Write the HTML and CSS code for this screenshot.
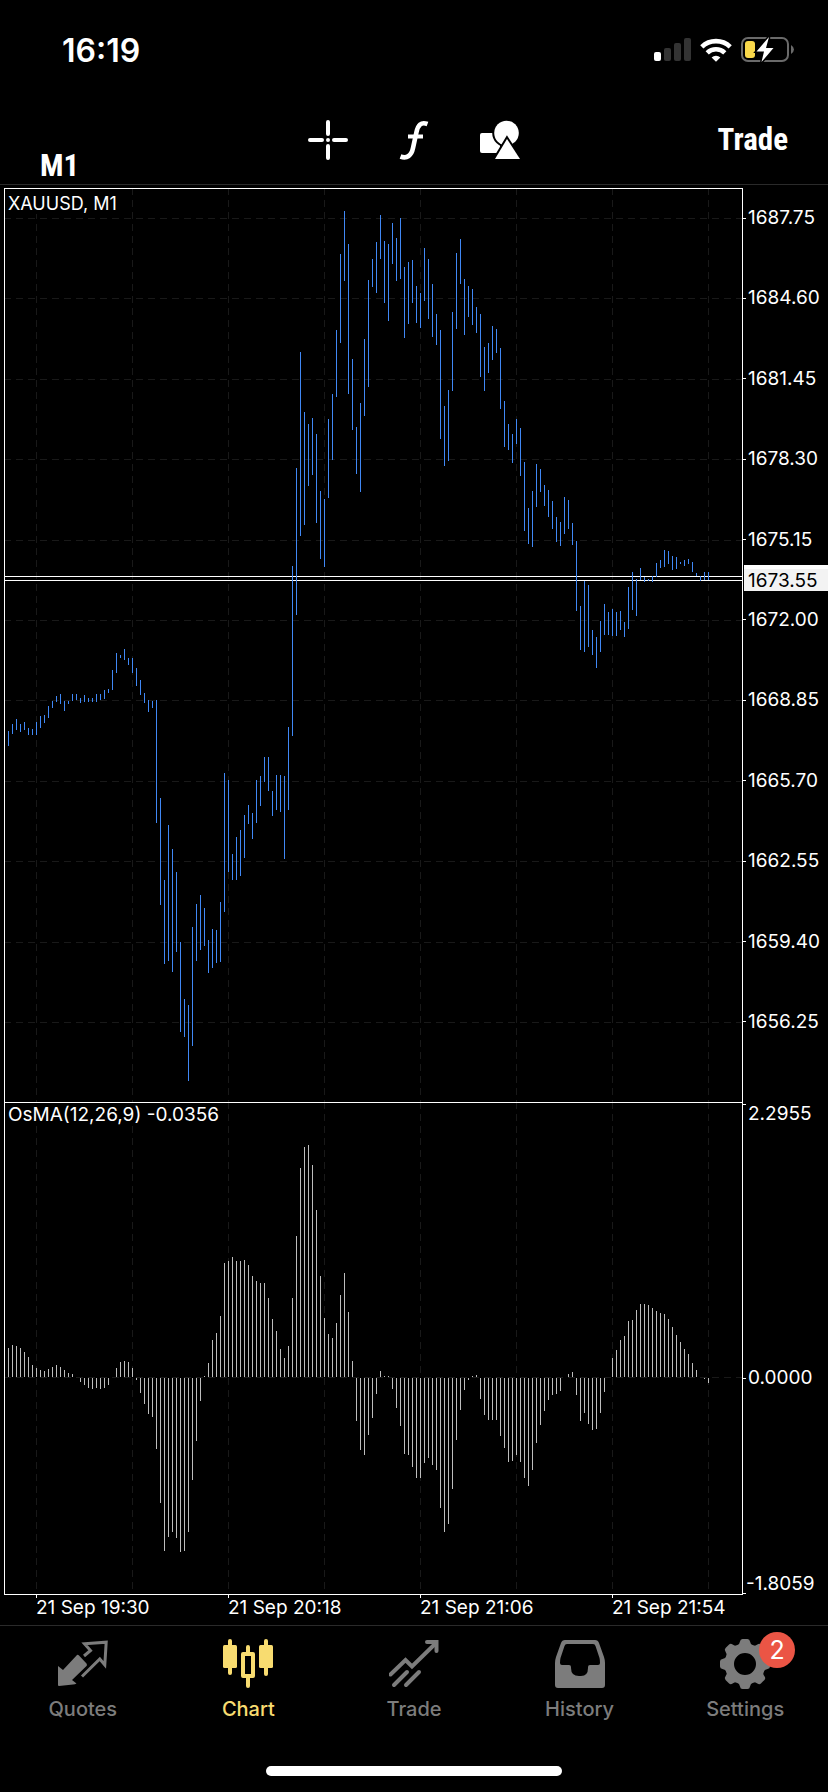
FILE: index.html
```html
<!DOCTYPE html>
<html lang="en">
<head>
  <meta charset="UTF-8" />
  <meta name="viewport" content="width=device-width, initial-scale=1" />
  <title>XAUUSD, M1</title>
  <link rel="stylesheet" href="styles.css">
</head>
<body>
  <div class="status-bar">
    <span class="clock">16:19</span>
    <div class="status-icons">
      <svg width="37" height="24" viewBox="0 0 37 24" aria-label="Signal">
        <rect x="0" y="14" width="7" height="9" rx="2" fill="#fff" />
        <g fill="#333">
          <rect x="10" y="10" width="7" height="13" rx="2" />
          <rect x="20" y="5" width="7" height="18" rx="2" />
          <rect x="30" y="0" width="7" height="23" rx="2" />
        </g>
      </svg>
      <svg width="32" height="24" viewBox="0 0 32 24" aria-label="Wi-Fi">
        <g fill="none" stroke="#fff" stroke-width="4.6">
          <path d="M1.8 8.8A20.5 20.5 0 0 1 30.2 8.8" />
          <path d="M7.2 14.8A12.7 12.7 0 0 1 24.8 14.8" />
        </g>
        <path d="M16 23.8L11.6 19.4A6.4 6.4 0 0 1 20.4 19.4Z" fill="#fff" />
      </svg>
      <svg width="53" height="26" viewBox="0 0 53 26" aria-label="Battery">
        <rect x="1" y="1" width="46" height="23" rx="6" fill="none" stroke="#6a6a6a" stroke-width="2" />
        <path d="M50 8Q53 10 53 12.500Q53 15 50 17Z" fill="#6a6a6a" />
        <rect x="4" y="4" width="10" height="17" rx="3" fill="#f9d84a" />
        <path d="M28 0L15.500 14.500H23L20.500 25L32.500 11H25Z" fill="#fff" stroke="#000" stroke-width="3" paint-order="stroke" />
      </svg>
    </div>
  </div>

  <header class="toolbar">
    <button class="text-button timeframe" type="button">M1</button>
    <div class="tools">
      <button type="button" aria-label="Crosshair">
        <svg width="40" height="40" viewBox="0 0 40 40" stroke="#fff" stroke-width="4" stroke-linecap="round">
          <path d="M20 2V14M20 26V38M2 20H14M26 20H38M20 20V20" />
        </svg>
      </button>
      <button type="button" aria-label="Indicators">
        <svg width="40" height="40" viewBox="0 0 40 40" fill="none" stroke="#fff" stroke-width="4">
          <path d="M33.500 4C27 1.500 24 5 22.500 12L19 28C17.500 35.500 13 39 6.500 36.500" stroke-width="4.600" />
          <path d="M14 16.500H29" />
        </svg>
      </button>
      <button type="button" aria-label="Objects">
        <svg width="40" height="40" viewBox="0 0 40 40" fill="#fff" stroke="#000" stroke-width="4" paint-order="stroke">
          <rect x="0" y="13" width="20" height="20" rx="2" stroke="none" />
          <circle cx="26.500" cy="13" r="12.300" />
          <path d="M27 19L40 39H15Z" />
        </svg>
      </button>
    </div>
    <button class="text-button trade" type="button">Trade</button>
  </header>

  <main class="chart">
    <div class="plot">
      <span class="plot-title">XAUUSD, M1</span>
      <svg id="price" viewBox="0 0 737 913"></svg>
    </div>
    <div class="axis price-axis">
      <span>1687.75</span>
      <span>1684.60</span>
      <span>1681.45</span>
      <span>1678.30</span>
      <span>1675.15</span>
      <span>1672.00</span>
      <span>1668.85</span>
      <span>1665.70</span>
      <span>1662.55</span>
      <span>1659.40</span>
      <span>1656.25</span>
      <strong class="price-tag">1673.55</strong>
    </div>

    <div class="plot">
      <span class="plot-title indicator">OsMA(12,26,9) -0.0356</span>
      <svg id="osma" viewBox="0 0 737 491"></svg>
    </div>
    <div class="axis osma-axis">
      <span class="max">2.2955</span>
      <span class="zero">0.0000</span>
      <span class="min">-1.8059</span>
    </div>

    <div class="dates">
      <time>21 Sep 19:30</time>
      <time>21 Sep 20:18</time>
      <time>21 Sep 21:06</time>
      <time>21 Sep 21:54</time>
    </div>
  </main>

  <footer>
    <nav class="tabs">
      <a href="#quotes">
        <svg width="50" height="50" viewBox="0 0 50 50">
          <path d="M0 27L5 31L19 16Q20 15.500 21 16.500L28.500 24.500Q29.500 26 28.500 27L14 41L18.500 44.500Q17 45.500 15 45.500L1 47Q0 47 0 46Z" fill="currentColor" />
          <path d="M26 17L32.500 11.500L26.500 4.800L48.200 3.200L46.800 26L41.800 20L24 37.500" fill="none" stroke="currentColor" stroke-width="3" />
        </svg>
        <span>Quotes</span>
      </a>
      <a href="#chart" class="active">
        <svg width="50" height="50" viewBox="0 0 50 50" fill="currentColor">
          <rect x="0" y="6" width="14" height="23" rx="1.500" />
          <rect x="5" y="0" width="4" height="36" rx="2" />
          <path d="M20 13H30Q32 13 32 15V37Q32 39 30 39H20Q18 39 18 37V15Q18 13 20 13ZM22 17V35H28V17Z" fill-rule="evenodd" />
          <path d="M23 14V8Q23 6 25 6Q27 6 27 8V14ZM23 38V47Q23 49 25 49Q27 49 27 47V38Z" />
          <rect x="36" y="6" width="14" height="23" rx="1.500" />
          <rect x="41" y="0" width="4" height="37" rx="2" />
        </svg>
        <span>Chart</span>
      </a>
      <a href="#trade">
        <svg width="50" height="50" viewBox="0 0 50 50" fill="none" stroke="currentColor" stroke-width="4">
          <path d="M1.500 35.500L16.500 21L23 27.500L47 4" stroke-linecap="round" />
          <path d="M38 3H47.500V12" stroke-linecap="round" />
          <path d="M5 46L18 33M17 46L30 33" stroke-linecap="round" />
        </svg>
        <span>Trade</span>
      </a>
      <a href="#history">
        <svg width="50" height="50" viewBox="0 0 50 50">
          <path d="M10 1H40Q43 1 44 4L49 18Q50 21 50 24V46Q50 49 47 49H3Q0 49 0 46V24Q0 21 1 18L6 4Q7 1 10 1ZM12 5Q10 5 9.500 7L5.500 19Q5 21 5 24Q5 26 7 26H14Q16 26 16 28V29Q16 37 24 37H26Q33 37 33 29V28Q33 26 35 26H43Q45 26 45 24Q45 21 44.500 19L40.500 7Q40 5 38 5Z" fill="currentColor" fill-rule="evenodd" />
        </svg>
        <span>History</span>
      </a>
      <a href="#settings">
        <svg width="50" height="50" viewBox="0 0 50 50">
          <g id="gear" fill="currentColor"></g>
        </svg>
        <b class="badge">2</b>
        <span>Settings</span>
      </a>
    </nav>
    <div class="home-indicator"></div>
  </footer>

  <script>
    const STEP = 4;
    const FIRST_X = 3;
    const ZERO_Y = 274;

    // top and bottom of each M1 bar, in pane units
    const bars = [
      [542,557],[535,545],[530,541],[535,543],[533,541],[539,546],[540,546],[533,546],[527,539],[526,534],
      [517,529],[512,519],[507,513],[505,515],[512,522],[512,515],[505,512],[505,511],[509,514],[506,513],
      [509,513],[509,513],[505,513],[505,511],[501,510],[500,504],[481,501],[464,484],[466,469],[460,471],
      [469,476],[469,484],[479,497],[491,506],[504,514],[511,523],[512,519],[511,634],[609,716],[691,775],
      [636,772],[660,783],[683,763],[753,843],[810,848],[816,892],[738,857],[715,772],[706,761],[719,757],
      [751,784],[740,779],[741,774],[713,773],[584,723],[591,683],[665,691],[648,691],[641,687],[626,669],
      [616,635],[624,650],[591,634],[587,617],[568,593],[568,602],[602,627],[586,621],[586,623],[587,670],
      [538,621],[377,547],[279,426],[163,347],[223,336],[235,297],[229,286],[245,334],[302,370],[310,378],
      [230,309],[205,271],[141,208],[65,154],[22,92],[55,205],[170,241],[238,285],[214,303],[150,227],
      [91,198],[70,98],[53,104],[26,70],[52,114],[55,132],[34,75],[49,92],[29,90],[78,149],
      [73,135],[71,114],[97,134],[104,139],[59,112],[70,130],[95,148],[125,156],[141,250],[217,277],
      [201,272],[123,202],[64,140],[50,95],[90,146],[97,128],[100,136],[118,144],[125,188],[158,202],
      [154,184],[137,171],[140,164],[159,220],[212,258],[235,261],[245,274],[230,255],[239,287],[273,342],
      [319,355],[302,358],[275,318],[280,303],[296,317],[301,328],[312,340],[328,353],[333,357],[308,345],
      [311,340],[334,356],[352,422],[417,461],[392,463],[396,458],[441,466],[448,479],[432,463],[415,446],
      [423,446],[420,447],[423,447],[422,441],[433,448],[398,440],[383,421],[390,427],[379,391],[388,393],
      [390,392],[387,393],[374,388],[371,379],[361,378],[362,375],[367,381],[368,380],[373,375],[371,377],
      [370,375],[373,383],[384,387],[387,392],[383,391],[383,391]
    ];

    // signed histogram heights
    const osma = [
      29,32,31,29,25,20,12,9,7,6,8,10,12,10,7,4,3,0,-4,-7,-10,-11,-10,-11,-10,-7,0,9,15,16,15,9,
      -2,-15,-26,-36,-39,-71,-125,-173,-159,-154,-160,-174,-173,-154,-102,-63,-23,1,14,37,44,61,
      114,116,120,116,116,117,112,101,96,94,94,79,58,46,28,19,31,79,141,209,230,232,212,167,
      101,59,43,39,54,82,104,65,16,-43,-72,-77,-57,-40,-16,6,1,1,-11,-30,-48,-76,-77,-89,-100,-100,
      -85,-80,-87,-92,-130,-154,-146,-111,-62,-32,-12,-2,1,2,-21,-37,-42,-42,-42,-58,-70,-84,-83,
      -77,-84,-100,-108,-92,-65,-47,-33,-22,-17,-16,-13,0,3,5,-17,-43,-35,-46,-52,-51,-35,-14,0,
      19,27,37,41,56,57,67,73,73,72,69,66,64,63,58,50,42,35,28,23,14,7,0,-1,-5
    ];

    const gridX = [31, 127, 223, 319, 415, 511, 607, 703];
    const gridY = [29, 109, 190, 270, 351, 431, 511, 592, 672, 753, 833];

    function addPath(svg, cls, d) {
      const path = document.createElementNS("http://www.w3.org/2000/svg", "path");
      path.setAttribute("class", cls);
      path.setAttribute("d", d);
      svg.appendChild(path);
    }

    function vLine(x, y1, y2) {
      return `M${x + 0.5} ${y1}V${y2}`;
    }

    function hLine(y) {
      return `M0 ${y + 0.5}H737`;
    }

    function drawPrice() {
      const svg = document.getElementById("price");
      addPath(svg, "grid", gridX.map(x => vLine(x, 0, 913)).join("") + gridY.map(hLine).join(""));
      addPath(svg, "quote", hLine(387) + hLine(391));
      addPath(svg, "bars", bars.map((b, i) => vLine(FIRST_X + i * STEP, b[0], b[1])).join(""));
    }

    function drawOsma() {
      const svg = document.getElementById("osma");
      addPath(svg, "grid", gridX.map(x => vLine(x, 0, 491)).join("") + hLine(ZERO_Y));
      addPath(svg, "histogram", osma.map((v, i) => {
        const from = v > 0 ? ZERO_Y : ZERO_Y + 1;
        return v ? vLine(FIRST_X + i * STEP, from, from - v) : "";
      }).join(""));
    }

    function drawGear() {
      const gear = document.getElementById("gear");
      addPath(gear, "", "M25 4.500A20.500 20.500 0 1 1 25 45.500A20.500 20.500 0 1 1 25 4.500ZM25 14A11 11 0 1 0 25 36A11 11 0 1 0 25 14Z");
      gear.firstChild.setAttribute("fill-rule", "evenodd");
      for (let i = 0; i < 8; i++) {
        addPath(gear, "", "M17 7Q19.500 5.500 20 2.500Q20.300 0 22.500 0H27.500Q29.700 0 30 2.500Q30.500 5.500 33 7L29 10H21Z");
        gear.lastChild.setAttribute("transform", `rotate(${i * 45} 25 25)`);
      }
    }

    drawPrice();
    drawOsma();
    drawGear();
  </script>
</body>
</html>
```
FILE: styles.css
```css
* {
  box-sizing: border-box;
}
body {
  margin: 0;
  min-height: 100vh;
  display: flex;
  flex-direction: column;
  background: #000;
  color: #fff;
  font-family: Inter, "Liberation Sans", sans-serif;
}
svg {
  display: block;
}
button {
  background: none;
  border: none;
  padding: 0;
  color: inherit;
  cursor: pointer;
}

.status-bar {
  display: flex;
  justify-content: space-between;
  align-items: center;
  height: 100px;
  padding: 0 34px 0 62px;
}
.clock {
  font-size: 32px;
  font-weight: 600;
}
.status-icons {
  display: flex;
  align-items: center;
  gap: 9px;
}

.toolbar {
  display: grid;
  grid-template-columns: 1fr auto 1fr;
  align-items: center;
  height: 85px;
  padding: 0 40px 4px;
  border-bottom: 1px solid #2a2a2a;
}
.text-button {
  font-family: "Roboto Condensed", Roboto, sans-serif;
  font-size: 31px;
  font-weight: 700;
  line-height: 28px;
}
.timeframe {
  justify-self: start;
  align-self: end;
}
.trade {
  justify-self: end;
}
.tools {
  display: flex;
  gap: 46px;
}

.chart {
  display: grid;
  grid-template-columns: 1fr 85px;
  padding: 3px 0 0 4px;
  font-size: 19px;
  line-height: 20px;
}
.plot {
  position: relative;
  border: 1px solid #fff;
  border-bottom: none;
}
.plot svg {
  width: 100%;
  height: auto;
}
.plot-title {
  position: absolute;
  top: 0;
  left: 0;
  padding: 5px 3px 0;
  background: #000;
  font-size: 18px;
}
.plot-title.indicator {
  padding-top: 2px;
  font-size: 19px;
}
.grid, .quote, .bars, .histogram {
  fill: none;
  stroke-width: 1;
  shape-rendering: crispEdges;
}
.grid {
  stroke: #191919;
  stroke-dasharray: 7 5;
  stroke-dashoffset: 1;
}
.quote {
  stroke: #fff;
}
.bars {
  stroke: #4088f5;
}
.histogram {
  stroke: #bdbdbd;
}

.axis {
  position: relative;
  display: flex;
  flex-direction: column;
}
.axis span {
  display: flex;
  align-items: center;
  gap: 2px;
}
.axis span::before {
  content: "";
  width: 3px;
  height: 1px;
  background: #fff;
}
.price-axis {
  justify-content: space-between;
  padding: 20px 0 70px;
}
.price-tag {
  position: absolute;
  top: 377px;
  left: 1px;
  right: 0;
  padding: 2px 0 0 4px;
  border-top: 4px solid #fff;
  background: #f3f3f3;
  color: #000;
  font-weight: 400;
}
.osma-axis {
  padding-top: 1px;
  border-top: 1px solid transparent;
}
.axis .max {
  flex: 264;
  align-items: flex-start;
}
.axis .zero {
  flex: 206;
  align-items: flex-start;
}
.axis .zero::before {
  margin-top: 10px;
}
.axis .min {
  align-items: flex-end;
  gap: 0;
}

.dates {
  display: grid;
  grid-template-columns: 32fr 192fr 192fr 192fr 131fr;
  height: 31px;
  border-top: 1px solid #fff;
  white-space: nowrap;
}
.dates time:first-child {
  grid-column: 2;
}
.dates time::before {
  content: "";
  display: block;
  width: 1px;
  height: 3px;
  background: #fff;
}

footer {
  flex: 1;
  display: flex;
  flex-direction: column;
  justify-content: space-between;
  border-top: 1px solid #2a2a2a;
  padding-bottom: 16px;
}
.tabs {
  display: grid;
  grid-template-columns: repeat(5, 1fr);
  padding-top: 13px;
}
.tabs a {
  position: relative;
  display: flex;
  flex-direction: column;
  align-items: center;
  gap: 8px;
  color: #7c7c7c;
  font-size: 20px;
  font-weight: 500;
  line-height: 24px;
  text-decoration: none;
}
.tabs .active {
  color: #f8dc70;
}
.badge {
  position: absolute;
  top: -7px;
  left: calc(50% + 14px);
  width: 36px;
  height: 36px;
  border-radius: 50%;
  background: #eb5545;
  color: #fff;
  font-size: 25px;
  font-weight: 400;
  line-height: 36px;
  text-align: center;
}
.home-indicator {
  align-self: center;
  width: 296px;
  height: 10px;
  border-radius: 5px;
  background: #fff;
}
```
